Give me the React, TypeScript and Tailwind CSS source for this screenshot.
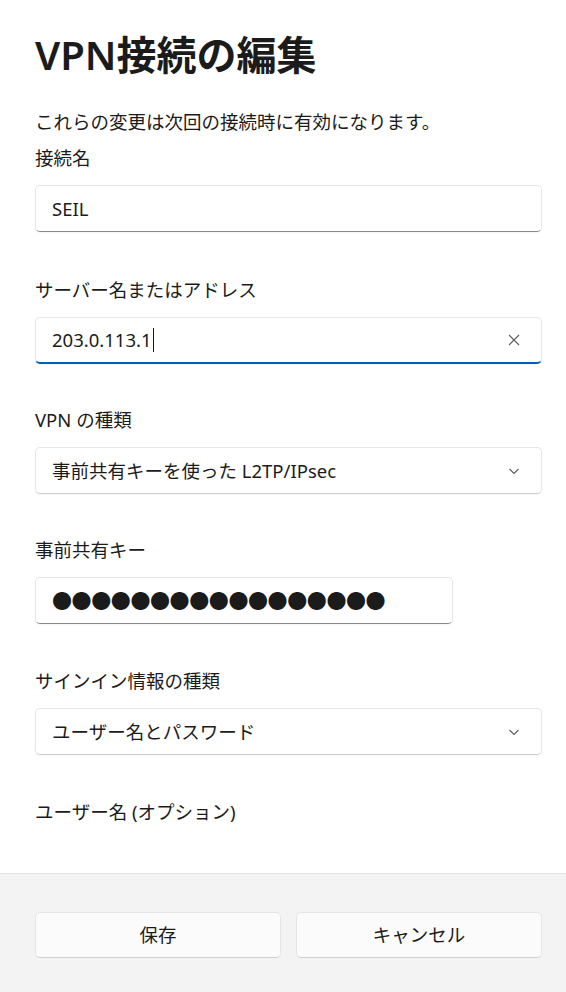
const font = "font-['Noto_Sans','Noto_Sans_CJK_JP',sans-serif]";

function Label({ children }: { children: React.ReactNode }) {
   return <div className="text-[18.5px] leading-6 text-[#1b1b1b]">{children}</div>;
}

function Chevron() {
   return (
      <svg width="14" height="14" viewBox="0 0 14 14" className="text-[#5c5c5c]">
         <path d="M2.5 5 L7 9.5 L11.5 5" fill="none" stroke="currentColor" strokeWidth="1.1" />
      </svg>
   );
}

function Field({
   value,
   width = "w-full",
   focused,
   clear,
   dots,
}: {
   value: string;
   width?: string;
   focused?: boolean;
   clear?: boolean;
   dots?: boolean;
}) {
   return (
      <div
         className={`${width} h-[47px] mt-[15px] flex items-center px-4 bg-white rounded-[5px] border border-[#e6e6e6] ${
            focused ? "border-b-2 border-b-[#005fb8]" : "border-b-[#8a8a8a]"
         } shadow-[0_1px_2px_rgba(0,0,0,0.04)]`}
      >
         {dots ? (
            <span className="text-[20px] leading-none tracking-[-0.4px] text-[#1b1b1b] font-['Noto_Sans_CJK_JP',sans-serif]">
               {"●".repeat(17)}
            </span>
         ) : (
            <span className="text-[18.5px] text-[#1b1b1b] flex items-center">
               {value}
               {focused && <span className="inline-block w-[1.5px] h-[24px] bg-[#1b1b1b] ml-[1px]" />}
            </span>
         )}
         {clear && (
            <svg width="14" height="14" viewBox="0 0 14 14" className="ml-auto mr-[4px] text-[#5c5c5c]">
               <path d="M2 2 L12 12 M12 2 L2 12" stroke="currentColor" strokeWidth="1.1" />
            </svg>
         )}
      </div>
   );
}

function Select({ value }: { value: string }) {
   return (
      <div className="w-full h-[47px] mt-[15px] flex items-center pl-4 pr-[20px] bg-white rounded-[5px] border border-[#e6e6e6] border-b-[#cfcfcf] shadow-[0_1px_2px_rgba(0,0,0,0.04)]">
         <span className="text-[18.5px] text-[#1b1b1b]">{value}</span>
         <span className="ml-auto">
            <Chevron />
         </span>
      </div>
   );
}

export default function App() {
   return (
      <div className={`${font} w-[566px] h-[992px] bg-white flex flex-col overflow-hidden`}>
         <div className="flex-1 pl-[35px] pr-[24px] pt-[30px]">
            <h1 className="text-[40px] leading-[50px] font-semibold text-[#1b1b1b]">VPN接続の編集</h1>
            <p className="mt-[30px] text-[18.5px] leading-6 text-[#1b1b1b]">
               これらの変更は次回の接続時に有効になります。
            </p>

            <div className="mt-[12px]">
               <Label>接続名</Label>
               <Field value="SEIL" />
            </div>

            <div className="mt-[46px]">
               <Label>サーバー名またはアドレス</Label>
               <Field value="203.0.113.1" focused clear />
            </div>

            <div className="mt-[44px]">
               <Label>VPN の種類</Label>
               <Select value="事前共有キーを使った L2TP/IPsec" />
            </div>

            <div className="mt-[44px]">
               <Label>事前共有キー</Label>
               <Field value="" dots width="w-[418px]" />
            </div>

            <div className="mt-[45px]">
               <Label>サインイン情報の種類</Label>
               <Select value="ユーザー名とパスワード" />
            </div>

            <div className="mt-[45px]">
               <Label>ユーザー名 (オプション)</Label>
            </div>
         </div>

         <div className="h-[119px] bg-[#f3f3f3] border-t border-[#e5e5e5] pl-[35px] pr-[24px] pt-[38px]">
            <div className="grid grid-cols-2 gap-[15px]">
               <button className="h-[46px] rounded-[5px] bg-[#fbfbfb] border border-[#e5e5e5] border-b-[#cfcfcf] text-[18.5px] text-[#1b1b1b]">
                  保存
               </button>
               <button className="h-[46px] rounded-[5px] bg-[#fbfbfb] border border-[#e5e5e5] border-b-[#cfcfcf] text-[18.5px] text-[#1b1b1b]">
                  キャンセル
               </button>
            </div>
         </div>
      </div>
   );
}
